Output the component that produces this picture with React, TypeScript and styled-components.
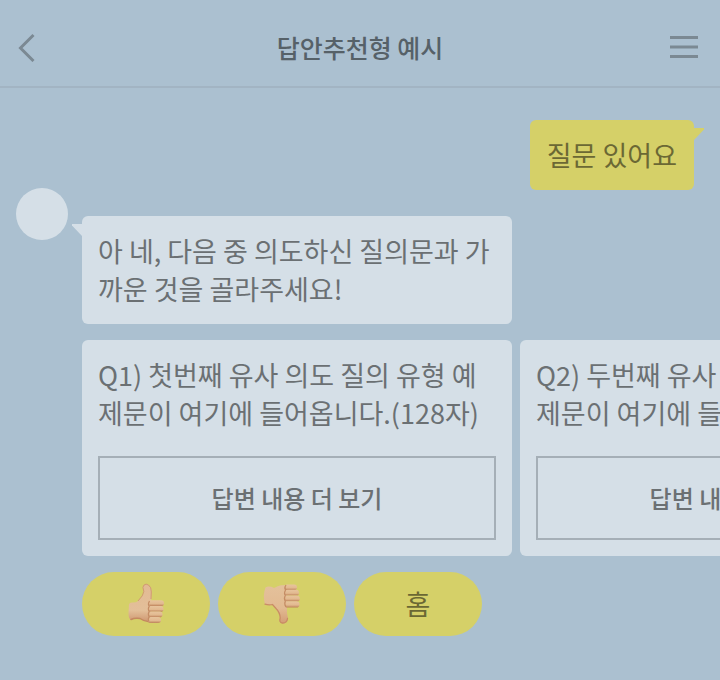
import React from "react";
import styled, { createGlobalStyle, css } from "styled-components";

const GlobalStyle = createGlobalStyle`
  *, *::before, *::after { box-sizing: border-box; }
  body {
    margin: 0;
    min-height: 100vh;
    background: #abc0d0;
    color: #6b7073;
    font-family: "Noto Sans CJK KR", sans-serif;
    font-size: 27px;
    line-height: 38px;
  }
  button { font: inherit; color: inherit; padding: 0; margin: 0; border: 0; background: none; cursor: pointer; }
`;

const Page = styled.div`
  overflow-x: hidden;
  min-height: 100vh;
`;

const Header = styled.header`
  display: grid;
  grid-template-columns: 48px 1fr 48px;
  align-items: center;
  height: 88px;
  padding: 8px 12px 0;
  border-bottom: 2px solid #a2b4c3;
`;

const Title = styled.h1`
  margin: 0;
  text-align: center;
  font-size: 25px;
  font-weight: 500;
  color: #566168;
`;

const IconButton = styled.button<{ $end?: boolean }>`
  && {
    display: flex;
    align-items: center;
    justify-content: ${(p) => (p.$end ? "flex-end" : "flex-start")};
    height: 48px;
    padding: ${(p) => (p.$end ? "0 10px 0 0" : "0 0 0 6px")};
    color: #7b8993;
  }
`;

const Chat = styled.main`
  display: flex;
  flex-direction: column;
  padding: 32px 0 44px 16px;
`;

const bubble = css`
  border-radius: 6px;
  padding: 16px;
`;

const UserBubble = styled.p`
  ${bubble}
  position: relative;
  align-self: flex-end;
  margin: 0 26px 0 0;
  padding: 16px 17px;
  background: #d5d068;
  color: #6b6834;
`;

const BotTurn = styled.section`
  display: grid;
  grid-template-columns: 52px minmax(0, 1fr);
  column-gap: 14px;
  margin-top: -2px;
`;

const Avatar = styled.div`
  width: 52px;
  height: 52px;
  border-radius: 50%;
  background: #d5dfe7;
`;

const Replies = styled.div`
  display: flex;
  flex-direction: column;
  gap: 16px;
  padding-top: 28px;
`;

const BotBubble = styled.p`
  ${bubble}
  position: relative;
  width: 430px;
  max-width: 100%;
  margin: 0;
  background: #d5dfe7;
`;

const Tail = styled.svg<{ $side: "left" | "right" }>`
  position: absolute;
  top: 8px;
  ${(p) => (p.$side === "left" ? "right" : "left")}: 100%;
  fill: ${(p) => (p.$side === "left" ? "#d5dfe7" : "#d5d068")};
`;

const Carousel = styled.div`
  display: flex;
  gap: 8px;
  overflow-x: auto;
  scrollbar-width: none;
`;

const Card = styled.article`
  ${bubble}
  flex: 0 0 430px;
  display: flex;
  flex-direction: column;
  gap: 24px;
  background: #d5dfe7;
`;

const Question = styled.p`
  margin: 0;
`;

const MoreButton = styled.button`
  && {
    height: 84px;
    border: 2px solid #a5afb7;
    font-size: 24px;
    font-weight: 500;
  }
`;

const QuickReplies = styled.div`
  display: flex;
  flex-wrap: wrap;
  gap: 8px;
`;

const QuickReply = styled.button`
  && {
    display: flex;
    align-items: center;
    justify-content: center;
    width: 128px;
    height: 64px;
    border-radius: 32px;
    background: #d5d068;
    color: #6b6834;
  }
`;

const ThumbUp = () => (
  <svg width="40" height="44" viewBox="0 0 40 44" aria-hidden="true">
    <defs>
      <linearGradient id="upPalm" x1="0" y1="0" x2="0" y2="1">
        <stop offset="0" stopColor="#e2ba94" />
        <stop offset="0.7" stopColor="#e3bf99" />
        <stop offset="1" stopColor="#cf9872" />
      </linearGradient>
      <linearGradient id="upFinger" x1="0" y1="0" x2="0" y2="1">
        <stop offset="0" stopColor="#e7c49d" />
        <stop offset="0.6" stopColor="#e2b990" />
        <stop offset="1" stopColor="#bd8159" />
      </linearGradient>
    </defs>
    <path fill="url(#upPalm)" d="M3 22.500Q3.500 20 7 20.500Q10.500 20.500 12 19Q17.500 13.500 18 10Q16 4.500 18 3Q20 1.300 22.500 3Q25.500 5 25.500 10L25 20V39.500Q18 39.500 14 36.500Q9 35.500 5 38Q2.500 36.500 2.500 31Z" />
    <path fill="none" stroke="#d19a72" strokeWidth="1" d="M12 19Q17.500 13.500 17.800 9.500Q16 4.500 18 3Q20 1.300 22.500 3Q25.500 5 25.300 10L25 17" />
    <path fill="none" stroke="#c48860" strokeWidth="1.500" strokeLinecap="round" d="M5 37.500Q9 35.500 14 36.500Q18 39.500 24 40" />
    <rect x="22.500" y="18.300" width="15.500" height="5.800" rx="2.900" fill="url(#upFinger)" />
    <rect x="22.500" y="24" width="15" height="5.800" rx="2.900" fill="url(#upFinger)" />
    <rect x="22.500" y="29.600" width="14" height="5.600" rx="2.800" fill="url(#upFinger)" />
    <rect x="22" y="35" width="13" height="6" rx="3" fill="url(#upFinger)" />
    <path fill="none" stroke="#c48c64" strokeWidth="1.200" d="M23.500 19Q21.500 22 23.200 24.200Q21.500 27 23.200 29.600Q21.500 32 23.200 35Q21.500 37 23 39.500" />
  </svg>
);

const ThumbDown = () => (
  <svg width="40" height="44" viewBox="0 0 40 44" aria-hidden="true">
    <defs>
      <linearGradient id="downPalm" x1="0" y1="0" x2="0" y2="1">
        <stop offset="0" stopColor="#e4c19b" />
        <stop offset="0.6" stopColor="#e2ba92" />
        <stop offset="1" stopColor="#d39d75" />
      </linearGradient>
      <linearGradient id="downFinger" x1="0" y1="0" x2="0" y2="1">
        <stop offset="0" stopColor="#e7c49d" />
        <stop offset="0.6" stopColor="#e2b990" />
        <stop offset="1" stopColor="#bd8159" />
      </linearGradient>
    </defs>
    <path fill="url(#downPalm)" d="M3.500 5.500Q7 3.500 12 6Q16 4 19 3.300L25 3V25Q24.500 31 26 36Q25.500 41.500 20.500 41.500Q16.500 41 18 36Q18 31 14 27L10.500 23Q7 23.500 3 22.500Q0.500 13 3.500 5.500Z" />
    <path fill="none" stroke="#c98d65" strokeWidth="1.300" strokeLinecap="round" d="M3 22.200Q7 23.500 10.500 22.500L14 26.500Q18 30.500 18.200 36Q16.800 40.500 20.500 41Q25 41 25.500 36.500" />
    <rect x="22.500" y="2.500" width="12.500" height="5.600" rx="2.800" fill="url(#downFinger)" />
    <rect x="22.500" y="7.800" width="14.500" height="5.800" rx="2.900" fill="url(#downFinger)" />
    <rect x="22.500" y="13.400" width="15.300" height="6" rx="3" fill="url(#downFinger)" />
    <rect x="22.500" y="19.200" width="15" height="6.300" rx="3.100" fill="url(#downFinger)" />
    <path fill="none" stroke="#c48c64" strokeWidth="1.200" d="M24 3Q22 5.500 23.500 8Q21.700 11 23.300 13.500Q21.500 16.500 23.300 19.300Q22 22 24 25" />
  </svg>
);

const cards = [
  "Q1) 첫번째 유사 의도 질의 유형 예제문이 여기에 들어옵니다.(128자)",
  "Q2) 두번째 유사 의도 질의 유형 예제문이 여기에 들어옵니다.(128자)",
];

export default function App() {
  return (
    <Page>
      <GlobalStyle />
      <Header>
        <IconButton type="button" aria-label="뒤로">
          <svg width="18" height="30" viewBox="0 0 18 30" fill="none" stroke="currentColor" strokeWidth="3" aria-hidden="true">
            <path d="M15.500 3L2.500 16L15.500 29" />
          </svg>
        </IconButton>
        <Title>답안추천형 예시</Title>
        <IconButton type="button" $end aria-label="메뉴">
          <svg width="28" height="22" viewBox="0 0 28 22" stroke="currentColor" strokeWidth="3" aria-hidden="true">
            <path d="M0 1.500H28M0 11H28M0 20.500H28" />
          </svg>
        </IconButton>
      </Header>
      <Chat>
        <UserBubble>
          질문 있어요
          <Tail $side="right" width="10" height="12" viewBox="0 0 10 12" aria-hidden="true">
            <path d="M0 0H10V1.500L0 12Z" />
          </Tail>
        </UserBubble>
        <BotTurn>
          <Avatar />
          <Replies>
            <BotBubble>
              아 네, 다음 중 의도하신 질의문과 가까운 것을 골라주세요!
              <Tail $side="left" width="10" height="12" viewBox="0 0 10 12" aria-hidden="true">
                <path d="M0 0H10V12L0 1.500Z" />
              </Tail>
            </BotBubble>
            <Carousel>
              {cards.map((question) => (
                <Card key={question}>
                  <Question>{question}</Question>
                  <MoreButton type="button">답변 내용 더 보기</MoreButton>
                </Card>
              ))}
            </Carousel>
            <QuickReplies>
              <QuickReply type="button" aria-label="좋아요"><ThumbUp /></QuickReply>
              <QuickReply type="button" aria-label="싫어요"><ThumbDown /></QuickReply>
              <QuickReply type="button">홈</QuickReply>
            </QuickReplies>
          </Replies>
        </BotTurn>
      </Chat>
    </Page>
  );
}
